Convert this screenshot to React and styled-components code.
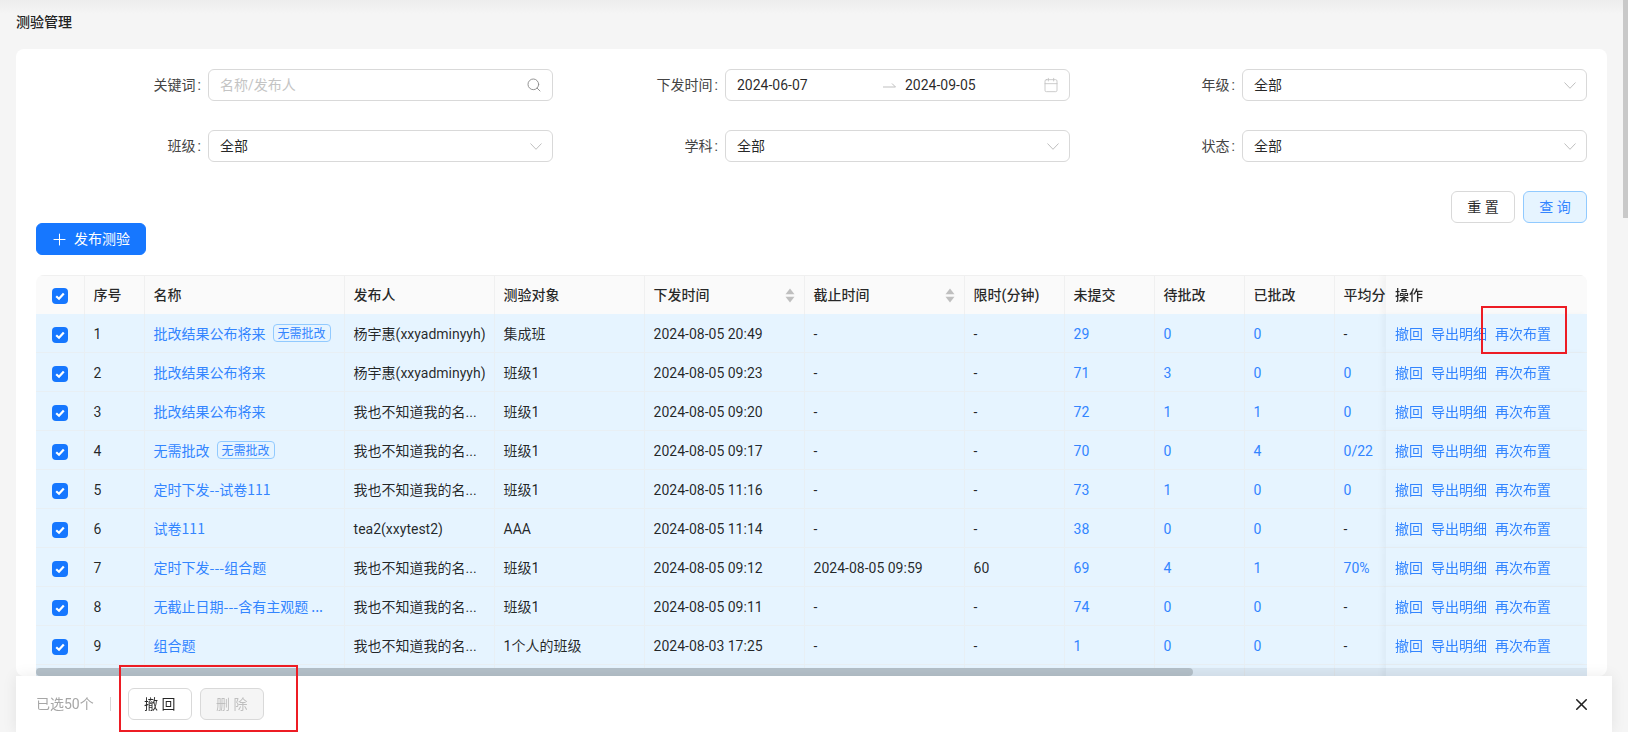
import React from "react";
import styled, { createGlobalStyle } from "styled-components";
import { Search, Calendar, Plus, X } from "lucide-react";

const GlobalStyle = createGlobalStyle`
  html, body {
    margin: 0;
    height: 100%;
    overflow: hidden;
    background: #f5f5f5;
  }
  body {
    font-family: Roboto, "Noto Sans CJK SC", "Noto Sans", sans-serif;
    font-size: 14px;
    line-height: 22px;
    color: rgba(0, 0, 0, 0.85);
  }
`;

const Page = styled.div`
  height: 732px;
  box-sizing: border-box;
  padding: 0 21px 0 16px;
  overflow: hidden;
  background: linear-gradient(#ededed 0, #f5f5f5 14px);
`;

const Title = styled.div`
  height: 49px;
  padding-top: 11px;
  box-sizing: border-box;
  font-weight: 500;
  color: #222;
`;

const Card = styled.div`
  background: #fff;
  border-radius: 8px;
  padding: 20px 20px 0;
`;

const FilterGrid = styled.div`
  display: grid;
  grid-template-columns: repeat(3, 517px);
  row-gap: 29px;
`;

const Field = styled.div`
  display: grid;
  grid-template-columns: 172px 345px;
  align-items: center;
`;

const Label = styled.label`
  text-align: right;
  padding-right: 7px;
  color: #444;

  &::after {
    content: ":";
    margin-left: 2px;
  }
`;

const Control = styled.div`
  height: 32px;
  box-sizing: border-box;
  display: flex;
  align-items: center;
  padding: 0 10px 0 11px;
  border: 1px solid #d9d9d9;
  border-radius: 6px;
  background: #fff;
  color: ${(p) => (p.$placeholder ? "#c4c4c4" : "rgba(0, 0, 0, 0.85)")};
`;

const Grow = styled.span`
  flex: 1;
`;

const DateText = styled.span`
  width: 146px;
`;

const RangeArrow = styled.svg`
  width: 13px;
  height: 8px;
  margin-right: 9px;
  flex: none;
`;

const FilterActions = styled.div`
  display: flex;
  justify-content: flex-end;
  gap: 8px;
  margin-top: 29px;
`;

const Button = styled.button`
  width: ${(p) => p.$width || 64}px;
  height: 32px;
  padding: 0;
  display: inline-flex;
  align-items: center;
  justify-content: center;
  gap: 7px;
  font: inherit;
  border-radius: 6px;
  border: 1px solid ${(p) =>
    p.$variant === "soft" ? "#91caff" : p.$variant === "primary" ? "#1677ff" : "#d9d9d9"};
  background: ${(p) =>
    p.$variant === "soft"
      ? "#e6f4ff"
      : p.$variant === "primary"
      ? "#1677ff"
      : p.disabled
      ? "#f5f5f5"
      : "#fff"};
  color: ${(p) =>
    p.$variant === "soft"
      ? "#3385ff"
      : p.$variant === "primary"
      ? "#fff"
      : p.disabled
      ? "#bfbfbf"
      : "rgba(0, 0, 0, 0.85)"};
`;

const TableWrap = styled.div`
  position: relative;
  height: 401px;
  margin-top: 20px;
  overflow: hidden;
  border-radius: 8px 8px 0 0;
`;

const Table = styled.table`
  width: 2079px;
  table-layout: fixed;
  border-collapse: separate;
  border-spacing: 0;
`;

const stickyCell = `
  position: sticky;
  right: 0;
  z-index: 1;
  overflow: visible;
  box-shadow: -4px 0 6px rgba(5, 5, 5, 0.035);
  border-right: 0;
`;

const Th = styled.th`
  height: 39px;
  box-sizing: border-box;
  padding: 0 9px;
  background: #fafafa;
  border-top: 1px solid #f0f0f0;
  border-right: 1px solid #f0f0f0;
  text-align: ${(p) => (p.$center ? "center" : "left")};
  font-weight: 500;
  white-space: nowrap;
  overflow: hidden;
  ${(p) => p.$sticky && stickyCell}
`;

const Td = styled.td`
  height: 39px;
  box-sizing: border-box;
  padding: 2px 9px 0;
  background: #e6f4ff;
  border-bottom: 1px solid #e8eff4;
  border-right: 1px solid #e8eff4;
  text-align: ${(p) => (p.$center ? "center" : "left")};
  color: ${(p) => (p.$link ? "#3385ff" : "rgba(0, 0, 0, 0.85)")};
  white-space: nowrap;
  overflow: hidden;
  ${(p) => p.$sticky && stickyCell}
`;

// the name column keeps the wider hyphens of the CJK face
const NameTd = styled(Td)`
  padding-top: 0;
  font-family: "Noto Sans CJK SC", sans-serif;
`;

const Check = styled.span`
  display: inline-flex;
  align-items: center;
  justify-content: center;
  width: 16px;
  height: 16px;
  vertical-align: middle;
  border-radius: 4px;
  background: #1677ff;
`;

const HeadInner = styled.div`
  display: flex;
  align-items: center;
  justify-content: space-between;
`;

const Tag = styled.span`
  display: inline-block;
  height: 18px;
  line-height: 16px;
  box-sizing: border-box;
  margin-left: 7px;
  padding: 0 4px;
  border: 1px solid #91caff;
  border-radius: 4px;
  font-size: 12px;
  vertical-align: 1px;
`;

const ActionLink = styled.a`
  color: #3385ff;
  margin-right: 8px;
`;

const ScrollTrack = styled.div`
  position: absolute;
  left: 0;
  right: 0;
  bottom: 0;
  height: 8px;
  z-index: 2;
  background: rgba(0, 0, 0, 0.05);
`;

const ScrollThumb = styled.div`
  width: 1157px;
  height: 8px;
  border-radius: 4px;
  background: #b4c0c9;
`;

const PageScroll = styled.div`
  position: fixed;
  top: 0;
  right: 0;
  width: 5px;
  height: 218px;
  background: #c9c9c9;
`;

const BottomBar = styled.div`
  position: fixed;
  left: 16px;
  width: 1596px;
  bottom: 0;
  height: 56px;
  box-sizing: border-box;
  display: flex;
  align-items: center;
  padding: 0 21px 0 20px;
  background: #fff;
  box-shadow: 0 0 14px rgba(0, 0, 0, 0.08);
  z-index: 3;
`;

const Selected = styled.span`
  color: #a6a6a6;
`;

const Divider = styled.span`
  width: 1px;
  height: 14px;
  margin: 0 17px 0 16px;
  background: #d9d9d9;
`;

const BarButtons = styled.div`
  display: flex;
  gap: 8px;
  flex: 1;
`;

const Annotation = styled.div`
  position: fixed;
  left: ${(p) => p.$x}px;
  top: ${(p) => p.$y}px;
  width: ${(p) => p.$w}px;
  height: ${(p) => p.$h}px;
  box-sizing: border-box;
  border: 2px solid #ed1c24;
  z-index: 4;
  pointer-events: none;
`;

const PlusIcon = styled(Plus)`
  margin: 0 -2px;
`;

const columns = [
  { title: "", width: 48.6 },
  { title: "序号", width: 60 },
  { title: "名称", width: 200 },
  { title: "发布人", width: 150 },
  { title: "测验对象", width: 150 },
  { title: "下发时间", width: 160, sort: true },
  { title: "截止时间", width: 160, sort: true },
  { title: "限时(分钟)", width: 100 },
  { title: "未提交", width: 90 },
  { title: "待批改", width: 90 },
  { title: "已批改", width: 90 },
  { title: "平均分", width: 90 },
  { title: "", width: 489.4 },
  { title: "操作", width: 201, sticky: true },
];

const ME = "我也不知道我的名...";
const YANG = "杨宇惠(xxyadminyyh)";
const LONG = "批改结果公布将来";

const rows = [
  [LONG, true, YANG, "集成班", "2024-08-05 20:49", "-", "-", 29, 0, 0, "-"],
  [LONG, false, YANG, "班级1", "2024-08-05 09:23", "-", "-", 71, 3, 0, 0],
  [LONG, false, ME, "班级1", "2024-08-05 09:20", "-", "-", 72, 1, 1, 0],
  ["无需批改", true, ME, "班级1", "2024-08-05 09:17", "-", "-", 70, 0, 4, "0/22"],
  ["定时下发--试卷111", false, ME, "班级1", "2024-08-05 11:16", "-", "-", 73, 1, 0, 0],
  ["试卷111", false, "tea2(xxytest2)", "AAA", "2024-08-05 11:14", "-", "-", 38, 0, 0, "-"],
  ["定时下发---组合题", false, ME, "班级1", "2024-08-05 09:12", "2024-08-05 09:59", "60", 69, 4, 1, "70%"],
  ["无截止日期---含有主观题 ...", false, ME, "班级1", "2024-08-05 09:11", "-", "-", 74, 0, 0, "-"],
  ["组合题", false, ME, "1个人的班级", "2024-08-03 17:25", "-", "-", 1, 0, 0, "-"],
];

const CheckBox = () => (
  <Check>
    <svg width="12" height="12" viewBox="0 0 12 12" fill="none">
      <path d="M2.2 6.2 5 8.8 9.8 3.4" stroke="#fff" strokeWidth="2.2" />
    </svg>
  </Check>
);

const SortIcon = () => (
  <svg width="10" height="15" viewBox="0 0 10 15" fill="#bfbfbf">
    <path d="M5 0.5 9.5 6.2H0.5z" />
    <path d="M5 14.5 9.5 8.8H0.5z" />
  </svg>
);

const Chevron = () => (
  <svg width="12" height="7" viewBox="0 0 12 7" fill="none">
    <path d="M0.5 0.5 6 6.3 11.5 0.5" stroke="#bfbfbf" strokeWidth="1" />
  </svg>
);

const Select = ({ label }) => (
  <Field>
    <Label>{label}</Label>
    <Control>
      <Grow>全部</Grow>
      <Chevron />
    </Control>
  </Field>
);

export default function App() {
  return (
    <>
      <GlobalStyle />
      <Page>
        <Title>测验管理</Title>
        <Card>
          <FilterGrid>
            <Field>
              <Label>关键词</Label>
              <Control $placeholder>
                <Grow>名称/发布人</Grow>
                <Search size={16} color="#8c8c8c" strokeWidth={1.4} />
              </Control>
            </Field>
            <Field>
              <Label>下发时间</Label>
              <Control>
                <DateText>2024-06-07</DateText>
                <RangeArrow viewBox="0 0 13 8" fill="none">
                  <path d="M0 6H12.5L9 2.5" stroke="#bfbfbf" strokeWidth="1" />
                </RangeArrow>
                <Grow>2024-09-05</Grow>
                <Calendar size={16} color="#bfbfbf" strokeWidth={1.2} />
              </Control>
            </Field>
            <Select label="年级" />
            <Select label="班级" />
            <Select label="学科" />
            <Select label="状态" />
          </FilterGrid>
          <FilterActions>
            <Button>重 置</Button>
            <Button $variant="soft">查 询</Button>
          </FilterActions>
          <Button $variant="primary" $width={110}>
            <PlusIcon size={19} strokeWidth={1.3} />
            发布测验
          </Button>
          <TableWrap>
            <Table>
              <colgroup>
                {columns.map((c, i) => (
                  <col key={i} width={c.width} />
                ))}
              </colgroup>
              <thead>
                <tr>
                  <Th $center>
                    <CheckBox />
                  </Th>
                  {columns.slice(1).map((c, i) => (
                    <Th key={i} $sticky={c.sticky}>
                      {c.sort ? (
                        <HeadInner>
                          {c.title}
                          <SortIcon />
                        </HeadInner>
                      ) : (
                        c.title
                      )}
                    </Th>
                  ))}
                </tr>
              </thead>
              <tbody>
                {rows.map((r, i) => (
                  <tr key={i}>
                    <Td $center>
                      <CheckBox />
                    </Td>
                    <Td>{i + 1}</Td>
                    <NameTd $link>
                      {r[0]}
                      {r[1] && <Tag>无需批改</Tag>}
                    </NameTd>
                    <Td>{r[2]}</Td>
                    <Td>{r[3]}</Td>
                    <Td>{r[4]}</Td>
                    <Td>{r[5]}</Td>
                    <Td>{r[6]}</Td>
                    <Td $link>{r[7]}</Td>
                    <Td $link>{r[8]}</Td>
                    <Td $link>{r[9]}</Td>
                    <Td $link={r[10] !== "-"}>{r[10]}</Td>
                    <Td />
                    <Td $sticky>
                      <ActionLink>撤回</ActionLink>
                      <ActionLink>导出明细</ActionLink>
                      <ActionLink>再次布置</ActionLink>
                    </Td>
                  </tr>
                ))}
                <tr>
                  {columns.map((c, i) => (
                    <Td key={i} $sticky={c.sticky} />
                  ))}
                </tr>
              </tbody>
            </Table>
            <ScrollTrack>
              <ScrollThumb />
            </ScrollTrack>
          </TableWrap>
        </Card>
      </Page>
      <PageScroll />
      <BottomBar>
        <Selected>已选50个</Selected>
        <Divider />
        <BarButtons>
          <Button>撤 回</Button>
          <Button disabled>删 除</Button>
        </BarButtons>
        <X size={19} color="#222" strokeWidth={2} />
      </BottomBar>
      <Annotation $x={1481} $y={306} $w={86} $h={48} />
      <Annotation $x={119} $y={665} $w={179} $h={67} />
    </>
  );
}
